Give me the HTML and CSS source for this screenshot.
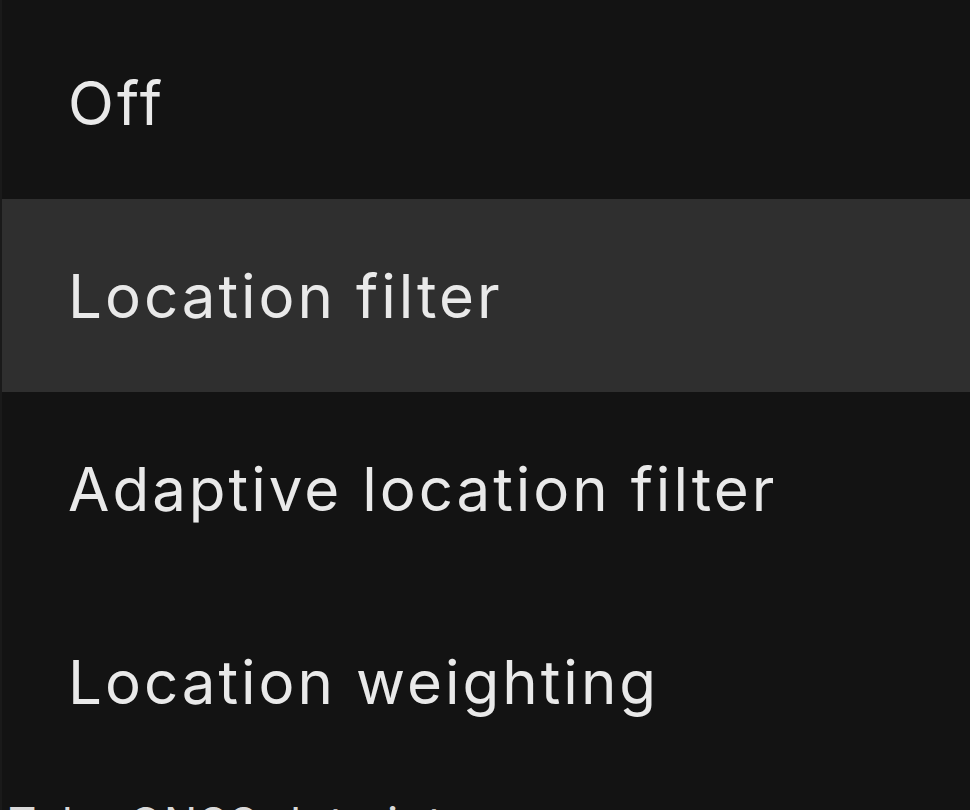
FILE: index.html
```html
<!DOCTYPE html>
<html lang="en">
<head>
<meta charset="utf-8">
<title>Location mode</title>
<link rel="stylesheet" href="styles.css">
</head>
<body>
<div class="screen">
  <ul class="menu">
    <li class="item">Off</li>
    <li class="item active">Location filter</li>
    <li class="item">Adaptive location filter</li>
    <li class="item">Location weighting</li>
  </ul>
  <p class="below">Take GNSS data into</p>
</div>
</body>
</html>
```
FILE: styles.css
```css
html, body {
  margin: 0;
  padding: 0;
  background: #131313;
  overflow: hidden;
}
.screen {
  width: 970px;
  height: 810px;
  overflow: hidden;
  border-left: 2px solid #1a1a1a;
  box-sizing: border-box;
  font-family: Inter, "Noto Sans", sans-serif;
  color: #e9e9e9;
}
.menu {
  list-style: none;
  margin: 0;
  padding: 6px 0 0 0;
}
.item {
  height: 193px;
  display: flex;
  align-items: center;
  padding-left: 66px;
  font-size: 60px;
  letter-spacing: 3px;
}
.active {
  background: #2f2f2f;
}
.below {
  margin: 23px 0 0 6px;
  font-size: 44px;
  line-height: 1;
  letter-spacing: 2px;
  color: #d9d9d9;
  white-space: nowrap;
}
```
